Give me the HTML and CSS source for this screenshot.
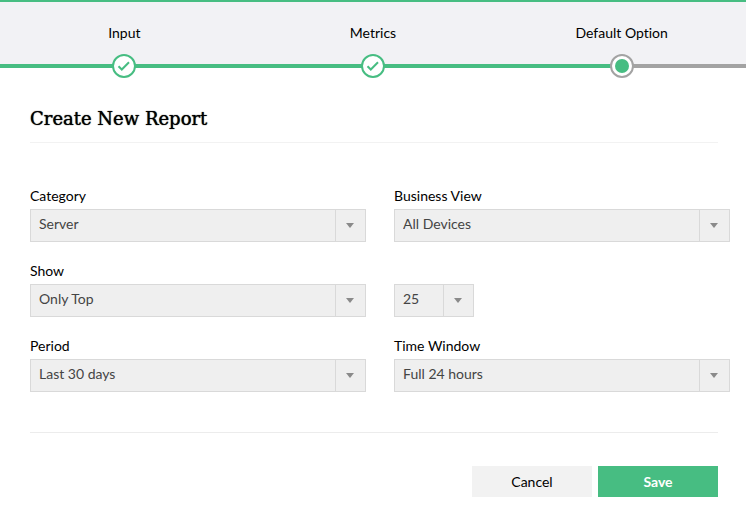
FILE: index.html
```html
<!DOCTYPE html>
<html lang="en">
<head>
  <meta charset="UTF-8">
  <meta name="viewport" content="width=device-width, initial-scale=1.0">
  <title>Create New Report</title>
  <link rel="stylesheet" href="styles.css">
</head>
<body>
  <ol class="steps">
    <li class="step done">
      <span class="step-name">Input</span>
      <span class="step-line">
        <svg class="marker" viewBox="0 0 24 24" aria-hidden="true">
          <circle cx="12" cy="12" r="11" fill="#fff" stroke="#47bd82" stroke-width="2"/>
          <path d="M6.5 12.2l3.3 3.3 7.2-7.2" fill="none" stroke="#47bd82" stroke-width="2"/>
        </svg>
      </span>
    </li>
    <li class="step done">
      <span class="step-name">Metrics</span>
      <span class="step-line">
        <svg class="marker" viewBox="0 0 24 24" aria-hidden="true">
          <circle cx="12" cy="12" r="11" fill="#fff" stroke="#47bd82" stroke-width="2"/>
          <path d="M6.5 12.2l3.3 3.3 7.2-7.2" fill="none" stroke="#47bd82" stroke-width="2"/>
        </svg>
      </span>
    </li>
    <li class="step current" aria-current="step">
      <span class="step-name">Default Option</span>
      <span class="step-line">
        <svg class="marker" viewBox="0 0 24 24" aria-hidden="true">
          <circle cx="12" cy="12" r="11" fill="#fff" stroke="#a3a3a3" stroke-width="2"/>
          <circle cx="12" cy="12" r="7" fill="#47bd82"/>
        </svg>
      </span>
    </li>
  </ol>

  <main class="content">
    <h1>Create New Report</h1>

    <form>
      <div class="fields">
        <div class="field">
          <label for="category">Category</label>
          <div class="select">
            <select id="category"><option>Server</option></select>
          </div>
        </div>
        <div class="field">
          <label for="view">Business View</label>
          <div class="select">
            <select id="view"><option>All Devices</option></select>
          </div>
        </div>
        <div class="field">
          <label for="show">Show</label>
          <div class="select">
            <select id="show"><option>Only Top</option></select>
          </div>
        </div>
        <div class="field">
          <div class="select small">
            <select id="count" aria-label="Number of results"><option>25</option></select>
          </div>
        </div>
        <div class="field">
          <label for="period">Period</label>
          <div class="select">
            <select id="period"><option>Last 30 days</option></select>
          </div>
        </div>
        <div class="field">
          <label for="window">Time Window</label>
          <div class="select">
            <select id="window"><option>Full 24 hours</option></select>
          </div>
        </div>
      </div>

      <div class="actions">
        <button type="button" class="btn">Cancel</button>
        <button type="submit" class="btn save">Save</button>
      </div>
    </form>
  </main>
</body>
</html>
```

FILE: styles.css
```css
* { box-sizing: border-box; }
body { margin: 0; background: #fff; color: #000; font: 14px/18px Lato, sans-serif; font-variant-ligatures: none; }

/* progress steps */
.steps { display: flex; margin: 0; padding: 0; list-style: none; background: #f2f2f5; border-top: 2px solid #47bd82; }
.step { flex: 1; padding-top: 22px; text-align: center; }
.step-name { display: block; margin-bottom: 22px; }
.step-line { display: flex; align-items: center; justify-content: center; height: 4px; background: #47bd82; }
.current .step-line { background: linear-gradient(to right, #47bd82 50%, #a3a3a3 50%); }
.marker { flex: none; width: 24px; height: 24px; }

/* form */
.content { padding: 37px 28px 18px 30px; }
h1 { margin: 0; padding-bottom: 9px; border-bottom: 1px solid #f2f2f2; font: 18px/28px "DejaVu Serif", serif; text-shadow: 0 0 1px #000; }
.fields { display: grid; grid-template-columns: 1fr 1fr; gap: 20px 28px; margin: 44px -12px 40px 0; }
.field { display: flex; flex-direction: column; justify-content: flex-end; }
label { margin-bottom: 4px; }
.select { position: relative; border: 1px solid #d9d9d9; background: #efefef; }
.select.small { width: 80px; }
select { display: block; width: 100%; height: 31px; padding: 0 38px 4px 8px; border: 0; background: none; color: #444; font: inherit; appearance: none; }
.select::before { content: ""; position: absolute; top: 0; bottom: 0; right: 29px; border-left: 1px solid #d9d9d9; pointer-events: none; }
.select::after { content: ""; position: absolute; top: 13px; right: 11px; border: 4px solid transparent; border-top: 5px solid #8a8a8a; border-bottom: 0; pointer-events: none; }

.actions { display: flex; justify-content: flex-end; gap: 6px; padding-top: 33px; border-top: 1px solid #ececec; }
.btn { width: 120px; height: 31px; padding: 0; border: 0; background: #f2f2f2; color: #000; font: inherit; }
.btn.save { background: #47bd82; color: #fff; font-weight: bold; }
```
